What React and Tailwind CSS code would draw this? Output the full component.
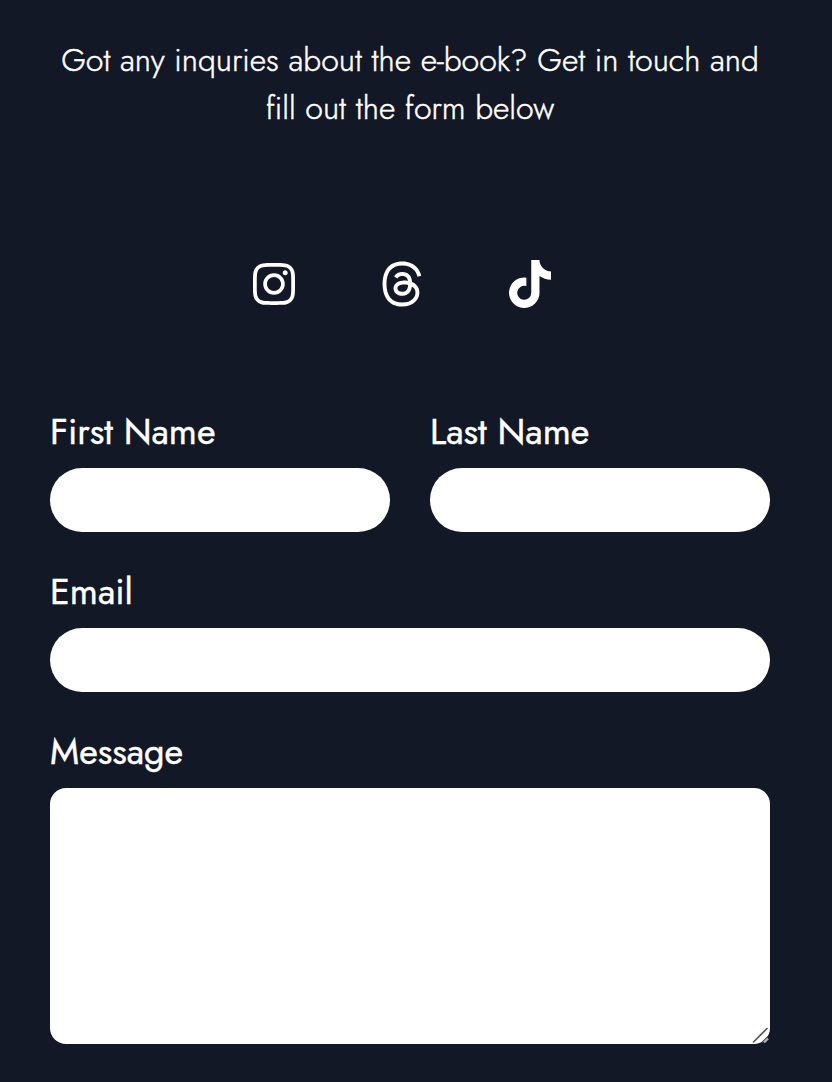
import { FaInstagram, FaThreads, FaTiktok } from "react-icons/fa6";

function Field({ label, children }) {
  return (
    <label className="flex flex-col">
      <span className="mb-[18px] text-4xl leading-[38px] whitespace-nowrap [-webkit-text-stroke:0.4px_white]">{label}</span>
      {children}
    </label>
  );
}

export default function App() {
  const input = "h-16 w-full rounded-full bg-white px-6 text-[32px] text-gray-900 outline-none";
  return (
    <main className="flex h-[1082px] w-[832px] flex-col bg-[#121825] pr-[62px] pl-[50px] pt-9 font-['Jost','Lato',sans-serif] text-white">
      <p className="text-center text-[32px] leading-12 font-light whitespace-nowrap [-webkit-text-stroke:0.45px_white]">
        Got any inquries about the e-book? Get in touch and
        <br />
        fill out the form below
      </p>
      <div className="mt-32 mr-4 flex justify-center gap-20 text-5xl">
        <FaInstagram />
        <FaThreads />
        <FaTiktok />
      </div>
      <form className="mt-[104px] flex flex-col gap-10">
        <div className="grid grid-cols-2 gap-10">
          <Field label="First Name">
            <input type="text" className={input} />
          </Field>
          <Field label="Last Name">
            <input type="text" className={input} />
          </Field>
        </div>
        <Field label="Email">
          <input type="email" className={input} />
        </Field>
        <Field label="Message">
          <span className="relative block h-64">
            <textarea className="block h-64 w-full resize-none rounded-2xl bg-white p-4 text-[32px] text-gray-900 outline-none" />
            <svg className="absolute right-0 bottom-0 size-[18px]" viewBox="0 0 18 18" fill="none">
              <path d="M1 16.5 15.5 2" stroke="#555" strokeWidth="1.6" />
              <path d="M10 16.5 16 10.5" stroke="#444b52" strokeWidth="1.4" />
              <path d="M12 16.5 16 12.5" stroke="#aab0b0" strokeWidth="2.4" />
            </svg>
          </span>
        </Field>
      </form>
    </main>
  );
}
